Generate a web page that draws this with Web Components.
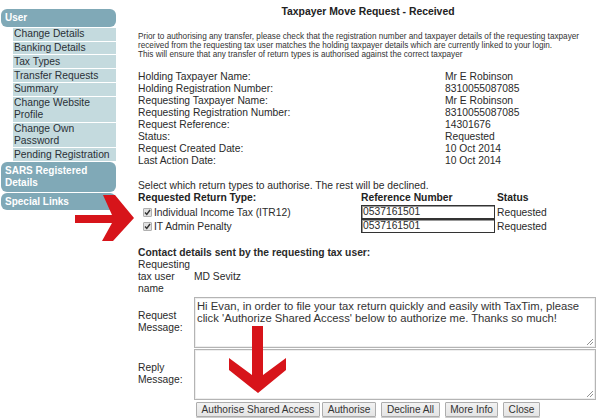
<!DOCTYPE html>
<html><head><meta charset="utf-8">
<style>
html,body{margin:0;padding:0;background:#fff}
body{width:600px;height:420px;overflow:hidden;font-family:"Liberation Sans",Arial,sans-serif;color:#2a2a2a}
</style></head><body>
<move-page>
  <side-nav slot="nav">
    <nav-head>User</nav-head>
    <nav-item>Change Details</nav-item>
    <nav-item>Banking Details</nav-item>
    <nav-item>Tax Types</nav-item>
    <nav-item>Transfer Requests</nav-item>
    <nav-item>Summary</nav-item>
    <nav-item>Change Website Profile</nav-item>
    <nav-item>Change Own Password</nav-item>
    <nav-item>Pending Registration</nav-item>
    <nav-head>SARS Registered Details</nav-head>
    <nav-head>Special Links</nav-head>
  </side-nav>
  <request-panel slot="main"></request-panel>
  <red-arrow slot="over" dir="right"></red-arrow>
  <red-arrow slot="over" dir="down"></red-arrow>
</move-page>
<script>
function def(name, css, html){
  customElements.define(name, class extends HTMLElement{
    connectedCallback(){
      if(this.shadowRoot) return;
      const r=this.attachShadow({mode:'open'});
      r.innerHTML='<style>'+css+'</style>'+(typeof html==='function'?html(this):html);
    }
  });
}
def('move-page',`:host{display:grid;grid-template-columns:115px 1fr;column-gap:22px;width:600px;height:420px;position:relative;box-sizing:border-box;padding-left:1px}`,
 `<slot name="nav"></slot><slot name="main"></slot><slot name="over"></slot>`);
def('side-nav',`:host{display:flex;flex-direction:column;gap:1px;padding-top:9px}`,`<slot></slot>`);
def('nav-head',`:host{display:block;background:#80a9b7;color:#fff;font-weight:bold;border-radius:6px;padding:3.2px 3px 3.2px 4px;font-size:10px;line-height:11.5px}`,`<slot></slot>`);
def('nav-item',`:host{display:block;background:#c4dade;color:#2a3036;margin-left:12px;padding:.4px 0 .4px 1px;font-size:10.3px;line-height:12px}`,`<slot></slot>`);
def('red-arrow',`:host{position:absolute;display:block;left:0;top:0;width:600px;height:420px;pointer-events:none}svg{display:block}`,
 h=>`<svg width="600" height="420" viewBox="0 0 600 420"><polygon fill="#d7141a" points="${h.getAttribute('dir')==='right'?'75,215 112,215 103,195 115,195 134,218 113,241 102,241 112,223 75,223':'252,326 263,326 263,375 286,358 286,370 258,393 229,370 229,358 252,375'}"/></svg>`);
def('detail-row',`:host{display:grid;grid-template-columns:307px 1fr;font-size:10.3px;line-height:12px}`,
 h=>`<span>${h.getAttribute('label')}</span><span>${h.getAttribute('value')}</span>`);
def('return-row',`:host{display:grid;grid-template-columns:223px 136px 1fr;align-items:center;font-size:10.3px;height:14.2px}
 .c{display:flex;align-items:center;gap:2px;padding:1px 0 0 5px}
 .b{box-sizing:border-box;width:9px;height:9px;border:1px solid #b0b0b0;background:#e2e2e2;border-radius:1px;display:flex;align-items:center;justify-content:center}
 .i{box-sizing:border-box;height:13.8px;margin-right:2px;border:1px solid #333;line-height:12px;padding-left:1px;box-shadow:inset 1px 1px 0 #999}
 svg{display:block}`,
 h=>`<span class="c"><span class="b"><svg width="7" height="7" viewBox="0 0 7 7"><path d="M1 3.5 2.8 5.5 6 1" fill="none" stroke="#333" stroke-width="1.4"/></svg></span><span>${h.getAttribute('label')}</span></span><span class="i">0537161501</span><span>Requested</span>`);
def('msg-box',`:host{display:block;box-sizing:border-box;width:402px;height:50.5px;border:1px solid #b4b4b4;background:#fff;position:relative;padding:2px 2px;font-size:11.25px;line-height:12.4px;color:#333;box-shadow:inset 0 0 0 1px #eee}
 svg{position:absolute;right:1px;bottom:1px}`,`<slot></slot><svg width="8" height="8" viewBox="0 0 8 8"><path d="M1 7 7 1M4 7 7 4" stroke="#777" stroke-width=".8" fill="none"/></svg>`);
def('form-row',`:host{display:grid;grid-template-columns:56px 1fr;align-items:center;font-size:10.3px;line-height:12px}`,
 h=>`<span>${h.getAttribute('label')}</span><slot></slot>`);
def('x-button',`:host{display:inline-flex;align-items:center;justify-content:center;box-sizing:border-box;height:15px;border:1px solid #adadad;background:linear-gradient(#f2f2f2,#e4e4e4);font-size:10.1px;color:#333;border-radius:1px;box-shadow:0 1px 0 #ccc;white-space:nowrap}`,`<slot></slot>`);
def('request-panel',`:host{display:block;padding-top:5px;width:460px}
 h1{margin:0;font-size:10.4px;line-height:14px;text-align:center;color:#222;width:460px}
 .intro{margin:12.5px 0 0;font-size:8.2px;line-height:9.2px;color:#333;white-space:nowrap}
 .details{margin-top:12px}
 .sel{margin-top:13px;font-size:10.3px;line-height:12px}
 .th{display:grid;grid-template-columns:223px 136px 1fr;font-size:10.3px;line-height:12px;font-weight:bold;color:#222}
 .rows{display:flex;flex-direction:column;margin-top:1px}
 .ct{margin-top:13.6px;font-size:10.3px;line-height:12px;font-weight:bold}
 .who{display:grid;grid-template-columns:56px 1fr;align-items:center;font-size:10.3px;line-height:12px}
 .forms{display:flex;flex-direction:column;gap:1.5px;margin-top:2px}
 .btns{display:flex;gap:2px;padding-left:58px;margin-top:2px}
 x-button:nth-child(1){width:124px}x-button:nth-child(2){width:54px}x-button:nth-child(3){width:59px;margin-left:3px}x-button:nth-child(4){width:53px;margin-left:3px}x-button:nth-child(5){width:37px;margin-left:3px}`,
 `<h1>Taxpayer Move Request - Received</h1>
 <p class="intro">Prior to authorising any transfer, please check that the registration number and taxpayer details of the requesting taxpayer<br>received from the requesting tax user matches the holding taxpayer details which are currently linked to your login.<br>This will ensure that any transfer of return types is authorised against the correct taxpayer</p>
 <div class="details">
 <detail-row label="Holding Taxpayer Name:" value="Mr E Robinson"></detail-row>
 <detail-row label="Holding Registration Number:" value="8310055087085"></detail-row>
 <detail-row label="Requesting Taxpayer Name:" value="Mr E Robinson"></detail-row>
 <detail-row label="Requesting Registration Number:" value="8310055087085"></detail-row>
 <detail-row label="Request Reference:" value="14301676"></detail-row>
 <detail-row label="Status:" value="Requested"></detail-row>
 <detail-row label="Request Created Date:" value="10 Oct 2014"></detail-row>
 <detail-row label="Last Action Date:" value="10 Oct 2014"></detail-row>
 </div>
 <div class="sel">Select which return types to authorise. The rest will be declined.</div>
 <div class="th"><span>Requested Return Type:</span><span>Reference Number</span><span>Status</span></div>
 <div class="rows"><return-row label="Individual Income Tax (ITR12)"></return-row><return-row label="IT Admin Penalty"></return-row></div>
 <div class="ct">Contact details sent by the requesting tax user:</div>
 <div class="who"><span>Requesting tax user name</span><span>MD Sevitz</span></div>
 <div class="forms">
 <form-row label="Request Message:"><msg-box>Hi Evan, in order to file your tax return quickly and easily with TaxTim, please click 'Authorize Shared Access' below to authorize me. Thanks so much!</msg-box></form-row>
 <form-row label="Reply Message:"><msg-box></msg-box></form-row>
 </div>
 <div class="btns"><x-button>Authorise Shared Access</x-button><x-button>Authorise</x-button><x-button>Decline All</x-button><x-button>More Info</x-button><x-button>Close</x-button></div>`);
</script>
</body></html>
